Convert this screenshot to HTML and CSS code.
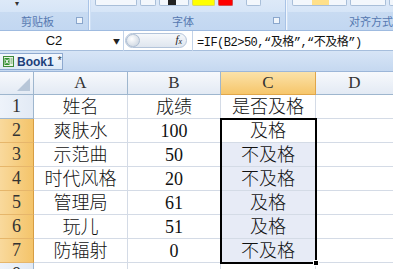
FILE: index.html
```html
<!DOCTYPE html>
<html>
<head>
<meta charset="utf-8">
<link rel="stylesheet" href="styles.css">
</head>
<body>
<div class="app">
  <div class="ribbon">
    <div class="group g1">
      <div class="tops"><span class="drop">&#9662;</span></div>
      <div class="glabel"><span class="gtext t1">剪贴板</span><span class="launcher"></span></div>
    </div>
    <div class="sep"></div>
    <div class="group g2">
      <div class="tops">
        <span class="tb w42"></span><span class="tb w16"></span><span class="tb w30 dark"></span><span class="tb w23 yellow"></span><span class="tb w15 red"></span><span class="tb w15 plain"></span>
      </div>
      <div class="glabel"><span class="gtext t2">字体</span><span class="launcher"></span></div>
    </div>
    <div class="sep"></div>
    <div class="group g3">
      <div class="tops">
        <span class="tb w55"><span class="hl"></span></span><span class="tb w36"></span><span class="tb w10"></span>
      </div>
      <div class="glabel"><span class="gtext t3">对齐方式</span></div>
    </div>
  </div>

  <div class="fbar">
    <div class="namebox"><span class="nm">C2</span><span class="nmarrow">&#9660;</span></div>
    <div class="capsule"><span class="knob"></span><span class="fx">f<sub>x</sub></span></div>
    <div class="formula">=IF(B2&gt;50,“及格”,“不及格”)</div>
  </div>

  <div class="tabbar">
    <div class="tab">
      <svg class="xicon" width="11" height="11" viewBox="0 0 11 11">
        <rect x="0.5" y="0.5" width="10" height="10" fill="#e9f4e4" stroke="#3f8a3a"/>
        <rect x="1.5" y="2" width="5" height="7" fill="#2f8f2f"/>
        <path d="M2.5 3.5 L5.5 7.5 M5.5 3.5 L2.5 7.5" stroke="#fff" stroke-width="1.1"/>
        <path d="M7.5 3 H9.5 M7.5 5 H9.5 M7.5 7 H9.5" stroke="#3f8a3a" stroke-width="0.8"/>
      </svg>
      <span class="tabname">Book1</span><span class="star">*</span>
    </div>
  </div>

  <div class="sheet">
    <div class="corner"><span class="tri"></span></div>
    <div class="ch">A</div>
    <div class="ch">B</div>
    <div class="ch sel">C</div>
    <div class="ch last">D</div>

    <div class="rh">1</div><div class="c">姓名</div><div class="c">成绩</div><div class="c">是否及格</div><div class="c last"></div>
    <div class="rh sel">2</div><div class="c">爽肤水</div><div class="c">100</div><div class="c">及格</div><div class="c last"></div>
    <div class="rh sel">3</div><div class="c">示范曲</div><div class="c">50</div><div class="c hi">不及格</div><div class="c last"></div>
    <div class="rh sel">4</div><div class="c">时代风格</div><div class="c">20</div><div class="c hi">不及格</div><div class="c last"></div>
    <div class="rh sel">5</div><div class="c">管理局</div><div class="c">61</div><div class="c hi">及格</div><div class="c last"></div>
    <div class="rh sel">6</div><div class="c">玩儿</div><div class="c">51</div><div class="c hi">及格</div><div class="c last"></div>
    <div class="rh sel">7</div><div class="c">防辐射</div><div class="c">0</div><div class="c hi">不及格</div><div class="c last"></div>
    <div class="rh">8</div><div class="c"></div><div class="c"></div><div class="c"></div><div class="c last"></div>

    <div class="selection"><span class="handle"></span></div>
  </div>
</div>
</body>
</html>
```

FILE: styles.css
```css
* { box-sizing: border-box; }
html, body { margin: 0; padding: 0; }
body { width: 393px; height: 269px; overflow: hidden; background: #fff; }
.app { width: 393px; height: 269px; overflow: hidden; font-family: "Noto Sans CJK SC", sans-serif; }

/* ribbon */
.ribbon {
  height: 31px;
  display: flex;
  background: #cfe0f5;
  border-bottom: 1px solid #9fbbe0;
}
.group { display: flex; flex-direction: column; height: 30px; }
.g1 { width: 88px; }
.g2 { width: 194px; }
.g3 { flex: 1; min-width: 0; }
.sep { width: 3px; background: linear-gradient(90deg, #a9c3e6 0, #a9c3e6 1px, #f2f7fd 1px, #f2f7fd 2px, #cfe0f5 2px); }
.tops {
  height: 12px;
  background: linear-gradient(#dde9f8, #d6e5f7);
  display: flex;
  align-items: flex-start;
  gap: 3px;
  padding-left: 4px;
}
.g1 .tops { padding-left: 15px; }
.drop { font-size: 8px; line-height: 6px; color: #333; }
.tb {
  height: 6px;
  border: 1px solid #a9bfd9;
  border-top: 0;
  border-radius: 0 0 2px 2px;
  background: #f3f7fc;
  display: block;
  position: relative;
  flex: none;
}
.w42 { width: 42px; }
.w16 { width: 16px; }
.w30 { width: 30px; }
.w23 { width: 23px; }
.w15 { width: 15px; }
.w10 { width: 10px; }
.w55 { width: 55px; }
.w36 { width: 36px; }
.dark { background: linear-gradient(90deg, #f3f7fc 0 8px, #222 8px 16px, #f3f7fc 16px); }
.yellow { background: #ffff00; border-color: #d8d860; }
.red { background: #ff0000; border-color: #d05050; }
.plain { margin-left: 10px; }
.hl { position: absolute; left: 19px; top: 0; width: 17px; height: 5px; background: #ffe08a; }
.glabel {
  height: 18px;
  background: linear-gradient(#c8dbf2, #c2d7f1);
  display: flex;
  align-items: center;
  position: relative;
}
.gtext { font-size: 11px; color: #5578b0; line-height: 14px; white-space: nowrap; flex: none; }
.t1 { margin-left: 21px; }
.t2 { margin-left: 81px; }
.t3 { margin-left: 61px; }
.launcher {
  width: 7px; height: 7px;
  border: 1px solid #8aa6cc;
  background: #eef4fb;
  position: absolute;
  right: 5px; top: 5px;
}

/* formula bar */
.fbar {
  height: 20px;
  display: flex;
  align-items: center;
  background: #fff;
  border-bottom: 1px solid #a6bedc;
}
.namebox {
  width: 124px;
  height: 20px;
  display: flex;
  align-items: center;
  border-right: 1px solid #c3d3e8;
}
.nm { width: 108px; text-align: center; font-family: "Liberation Sans", sans-serif; font-size: 13px; color: #111; }
.nmarrow { font-size: 7px; color: #222; margin-left: 5px; }
.capsule {
  margin-left: 1px;
  width: 62px; height: 15px;
  border-radius: 8px;
  border: 1px solid #b3c4da;
  background: linear-gradient(#f6f8fb, #dfe6ef);
  display: flex; align-items: center;
}
.knob {
  width: 14px; height: 13px; border-radius: 7px;
  background: radial-gradient(circle at 40% 35%, #fff, #c4cfdc);
  border: 1px solid #aebed2;
}
.fx {
  margin-left: auto; margin-right: 4px;
  font-family: "Liberation Serif", serif; font-style: italic;
  font-size: 11px; color: #222; line-height: 11px;
}
.fx sub { font-size: 8px; vertical-align: -1px; }
.formula {
  margin-left: 5px;
  padding-left: 4px;
  border-left: 1px solid #c3d3e8;
  height: 20px;
  display: flex; align-items: center;
  font-family: "Liberation Mono", "Noto Sans CJK SC", monospace;
  font-size: 12px;
  letter-spacing: -0.5px;
  color: #111;
  white-space: nowrap;
}

/* tab bar */
.tabbar {
  height: 21px;
  background: linear-gradient(#d7e5f6, #c5d8f0);
  border-bottom: 1px solid #9cb6d8;
  padding-top: 2px;
}
.tab {
  width: 63px; height: 17px;
  background: linear-gradient(#f4f8fd, #dde9f7);
  border: 1px solid #8ea9cf;
  border-left: 0;
  display: flex; align-items: center;
  padding-left: 3px;
}
.xicon { flex: none; }
.tabname { margin-left: 3px; font-family: "Liberation Sans", sans-serif; font-weight: bold; font-size: 12px; color: #1d3f7a; }
.star { margin-left: 4px; font-family: "Liberation Sans", sans-serif; font-size: 10px; color: #333; align-self: flex-start; margin-top: 1px; }

/* sheet */
.sheet {
  display: grid;
  grid-template-columns: 34px 94px 93px 95px 77px;
  grid-template-rows: 23px repeat(8, 24px);
  position: relative;
}
.corner, .ch, .rh {
  background: linear-gradient(#f7f9fc, #e3eaf4);
  border-right: 1px solid #9eb6ce;
  border-bottom: 1px solid #9eb6ce;
  display: flex; align-items: center; justify-content: center;
  font-family: "Liberation Serif", serif;
  font-size: 17px;
  color: #333;
}
.corner { position: relative; }
.tri {
  position: absolute; right: 3px; bottom: 3px;
  width: 0; height: 0;
  border-left: 13px solid transparent;
  border-bottom: 13px solid #b7c6d8;
}
.rh { background: linear-gradient(90deg, #eef3fa, #e2eaf5); font-size: 18px; }
.ch.sel { background: linear-gradient(#fbe2a9, #f6c66b); border-color: #e0a64a; }
.rh.sel { background: linear-gradient(90deg, #f9d99c, #f4c46a); border-right-color: #d69d44; border-bottom-color: #e6b66b; }
.ch.last, .c.last { border-right: 0; }
.c {
  border-right: 1px solid #d4dbe6;
  border-bottom: 1px solid #d4dbe6;
  display: flex; align-items: center; justify-content: center;
  font-family: "Liberation Serif", "Noto Sans CJK SC", serif;
  font-size: 18px;
  font-weight: 300;
  color: #111;
  line-height: 1;
}
.c.hi { background: #e7ebf6; }
.selection {
  position: absolute;
  left: 220px; top: 46px;
  width: 97px; height: 146px;
  border: 2px solid #000;
  pointer-events: none;
}
.handle {
  position: absolute; right: -4px; bottom: -4px;
  width: 6px; height: 6px;
  background: #000;
  border: 1px solid #fff;
}
```
